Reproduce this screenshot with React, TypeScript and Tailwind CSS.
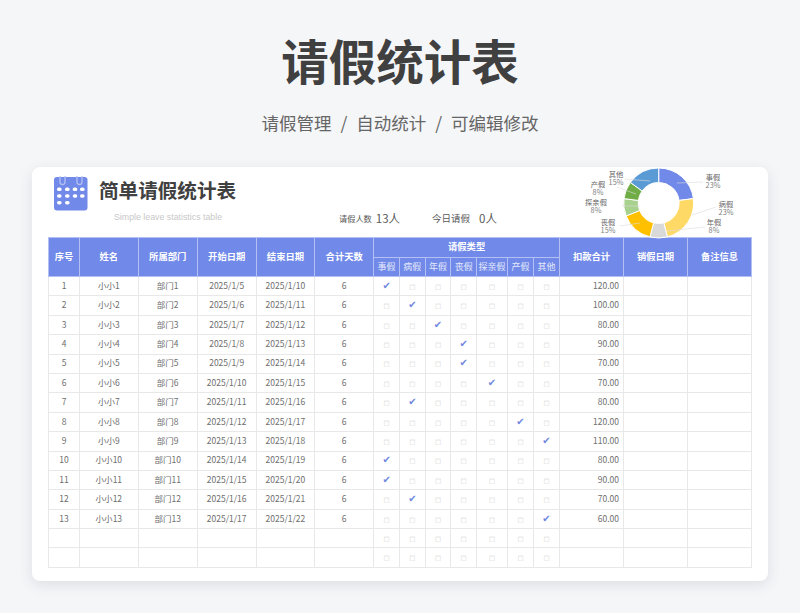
const leaveTypes = ["事假", "病假", "年假", "丧假", "探亲假", "产假", "其他"];

const rows = [
  { start: "2025/1/5", end: "2025/1/10", type: 0, amount: "120.00" },
  { start: "2025/1/6", end: "2025/1/11", type: 1, amount: "100.00" },
  { start: "2025/1/7", end: "2025/1/12", type: 2, amount: "80.00" },
  { start: "2025/1/8", end: "2025/1/13", type: 3, amount: "90.00" },
  { start: "2025/1/9", end: "2025/1/14", type: 3, amount: "70.00" },
  { start: "2025/1/10", end: "2025/1/15", type: 4, amount: "70.00" },
  { start: "2025/1/11", end: "2025/1/16", type: 1, amount: "80.00" },
  { start: "2025/1/12", end: "2025/1/17", type: 5, amount: "120.00" },
  { start: "2025/1/13", end: "2025/1/18", type: 6, amount: "110.00" },
  { start: "2025/1/14", end: "2025/1/19", type: 0, amount: "80.00" },
  { start: "2025/1/15", end: "2025/1/20", type: 0, amount: "90.00" },
  { start: "2025/1/16", end: "2025/1/21", type: 1, amount: "70.00" },
  { start: "2025/1/17", end: "2025/1/22", type: 6, amount: "60.00" },
];

const slices = [
  { pct: 23, color: "#7189e8" },
  { pct: 23, color: "#ffd966" },
  { pct: 8, color: "#d9d9d9" },
  { pct: 15, color: "#ffc000" },
  { pct: 8, color: "#a9d18e" },
  { pct: 8, color: "#70ad47" },
  { pct: 15, color: "#5b9bd5" },
];

const labels = [
  { x: 143, y: 11, name: "事假", pct: "23%", line: "M107 14 L133 13" },
  { x: 156, y: 38, name: "病假", pct: "23%", line: "M122 46 L146 38" },
  { x: 144, y: 56, name: "年假", pct: "8%", line: "M97 62 L135 58" },
  { x: 38, y: 56, name: "丧假", pct: "15%", line: "M50 57 L70 54" },
  { x: 26, y: 36, name: "探亲假", pct: "8%", line: "M52 37 L70 37" },
  { x: 28, y: 18, name: "产假", pct: "8%", line: "M47 18 L66 25" },
  { x: 46, y: 8, name: "其他", pct: "15%", line: "M55 10 L80 12" },
];

function polar(cx: number, cy: number, r: number, deg: number) {
  const a = ((deg - 90) * Math.PI) / 180;
  return [cx + r * Math.cos(a), cy + r * Math.sin(a)];
}

function slicePath(from: number, to: number) {
  const cx = 88.7;
  const cy = 34;
  const R = 35;
  const r = 20.5;
  const [x1, y1] = polar(cx, cy, R, from);
  const [x2, y2] = polar(cx, cy, R, to);
  const [x3, y3] = polar(cx, cy, r, to);
  const [x4, y4] = polar(cx, cy, r, from);
  const large = to - from > 180 ? 1 : 0;
  return `M${x1} ${y1} A${R} ${R} 0 ${large} 1 ${x2} ${y2} L${x3} ${y3} A${r} ${r} 0 ${large} 0 ${x4} ${y4} Z`;
}

function LeaveChart() {
  let angle = 0;
  return (
    <svg width="181" height="68" viewBox="0 0 181 68" className="block overflow-visible">
      {slices.map((s) => {
        const from = angle;
        angle += (s.pct / 100) * 360;
        return <path key={s.color} d={slicePath(from, angle)} fill={s.color} stroke="#ffffff" strokeWidth="1" />;
      })}
      {labels.map((l) => (
        <g key={l.name}>
          <path d={l.line} fill="none" stroke="#dcdcdc" strokeWidth="0.6" />
          <text textAnchor="middle" fontSize="7.3">
            <tspan x={l.x} y={l.y} fill="#666666">
              {l.name}
            </tspan>
            <tspan x={l.x} y={l.y + 8.3} fill="#808080">
              {l.pct}
            </tspan>
          </text>
        </g>
      ))}
    </svg>
  );
}

function CalendarIcon() {
  return (
    <svg width="34" height="36" viewBox="0 0 34 36" className="block">
      <rect x="0" y="2" width="33.5" height="33.5" rx="3" fill="#7189e8" />
      <path d="M6 1 V7 a2.5 2.5 0 0 0 5 0 V1" fill="none" stroke="#b4c0f3" strokeWidth="1.3" />
      <path d="M23 1 V7 a2.5 2.5 0 0 0 5 0 V1" fill="none" stroke="#b4c0f3" strokeWidth="1.3" />
      {[14.3, 21, 27.7].map((cy, r) =>
        [5.3, 13.3, 21, 28.3].slice(0, r === 2 ? 2 : 4).map((cx) => (
          <rect key={`${cx}-${cy}`} x={cx - 2.3} y={cy - 1.8} width="4.6" height="3.6" rx="1.7" fill="#ffffff" />
        )),
      )}
    </svg>
  );
}

const headCell = "border border-[#b4c0f3] bg-[#7189e8] text-center align-middle text-[9.3px] font-bold text-white";
const bodyCell = "h-[19.4px] border border-[#e8e8e8] p-0 pb-[2px] text-center align-middle text-[#6e6e6e]";

function CheckCell({ checked }: { checked: boolean }) {
  return (
    <td className={bodyCell}>
      {checked ? (
        <span className="text-[10px] leading-none text-[#6f87e0] [font-family:'DejaVu_Sans',sans-serif]">✔</span>
      ) : (
        <span className="text-[6.5px] leading-none text-[#cfcfcf] [font-family:'DejaVu_Sans',sans-serif]">□</span>
      )}
    </td>
  );
}

export default function App() {
  return (
    <div className="flex h-[613px] w-[800px] flex-col items-center overflow-hidden bg-[#f5f6f8] [font-family:'Noto_Sans_CJK_SC','Noto_Sans',sans-serif]">
      <h1 className="mt-[26px] text-[47.5px] leading-[68px] font-bold text-[#404040]">请假统计表</h1>
      <p className="mt-[16px] text-[17.5px] leading-[26px] whitespace-pre text-[#666666] [word-spacing:5px]">请假管理 / 自动统计 / 可编辑修改</p>

      <div className="mt-[31px] h-[414px] w-[736px] rounded-lg bg-white pl-4 shadow-[0_4px_14px_rgba(60,70,90,0.13)]">
        <div className="flex h-[70px] w-[703px]">
          <div className="w-[291px] pt-[8px] pl-[6px]">
            <div className="flex items-start gap-[11px]">
              <CalendarIcon />
              <span className="mt-[1px] text-[19.6px] leading-[28px] font-bold text-[#404040]">简单请假统计表</span>
            </div>
            <div className="pl-[60px] text-[8.8px] leading-[13px] text-[#c8c8c8] [font-family:'Liberation_Sans',sans-serif]">
              Simple leave statistics table
            </div>
          </div>
          <div className="flex h-[63px] items-end pb-[3px] text-[#595959]">
            <span className="text-[8.2px] leading-[18px]">请假人数</span>
            <span className="ml-[4px] text-[11.5px] leading-[18px]">13人</span>
            <span className="ml-[32px] text-[9.5px] leading-[18px]">今日请假</span>
            <span className="ml-[9px] text-[11.5px] leading-[18px]">0人</span>
          </div>
          <div className="ml-auto pt-[2px]">
            <LeaveChart />
          </div>
        </div>

        <table className="w-[703px] table-fixed border-collapse text-[8.5px]">
          <colgroup>
            <col className="w-[31px]" />
            <col className="w-[58.7px]" />
            <col className="w-[59px]" />
            <col className="w-[59px]" />
            <col className="w-[58.5px]" />
            <col className="w-[59px]" />
            <col className="w-[25.8px]" />
            <col className="w-[25.7px]" />
            <col className="w-[25.7px]" />
            <col className="w-[25.6px]" />
            <col className="w-[31px]" />
            <col className="w-[26px]" />
            <col className="w-[26px]" />
            <col className="w-[64px]" />
            <col className="w-[64px]" />
            <col className="w-[64px]" />
          </colgroup>
          <thead>
            <tr className="h-[19.5px]">
              {["序号", "姓名", "所属部门", "开始日期", "结束日期", "合计天数"].map((h) => (
                <th key={h} rowSpan={2} className={headCell}>
                  {h}
                </th>
              ))}
              <th colSpan={7} className={headCell}>
                请假类型
              </th>
              {["扣款合计", "销假日期", "备注信息"].map((h) => (
                <th key={h} rowSpan={2} className={headCell}>
                  {h}
                </th>
              ))}
            </tr>
            <tr className="h-[19.5px]">
              {leaveTypes.map((t) => (
                <th key={t} className="border border-[#b4c0f3] bg-[#7189e8] p-0 text-center align-middle text-[9px] font-normal whitespace-nowrap text-[#e4e9fb]">
                  {t}
                </th>
              ))}
            </tr>
          </thead>
          <tbody>
            {rows.map((row, i) => (
              <tr key={row.start}>
                <td className={bodyCell}>{i + 1}</td>
                <td className={bodyCell}>小小{i + 1}</td>
                <td className={bodyCell}>部门{i + 1}</td>
                <td className={bodyCell}>{row.start}</td>
                <td className={bodyCell}>{row.end}</td>
                <td className={bodyCell}>6</td>
                {leaveTypes.map((t, k) => (
                  <CheckCell key={t} checked={row.type === k} />
                ))}
                <td className={`${bodyCell} !pr-[4px] !text-right`}>{row.amount}</td>
                <td className={bodyCell}></td>
                <td className={bodyCell}></td>
              </tr>
            ))}
            {[14, 15].map((n) => (
              <tr key={n}>
                {[1, 2, 3, 4, 5, 6].map((c) => (
                  <td key={c} className={bodyCell}></td>
                ))}
                {leaveTypes.map((t) => (
                  <CheckCell key={t} checked={false} />
                ))}
                {[1, 2, 3].map((c) => (
                  <td key={c} className={bodyCell}></td>
                ))}
              </tr>
            ))}
          </tbody>
        </table>
      </div>
    </div>
  );
}
